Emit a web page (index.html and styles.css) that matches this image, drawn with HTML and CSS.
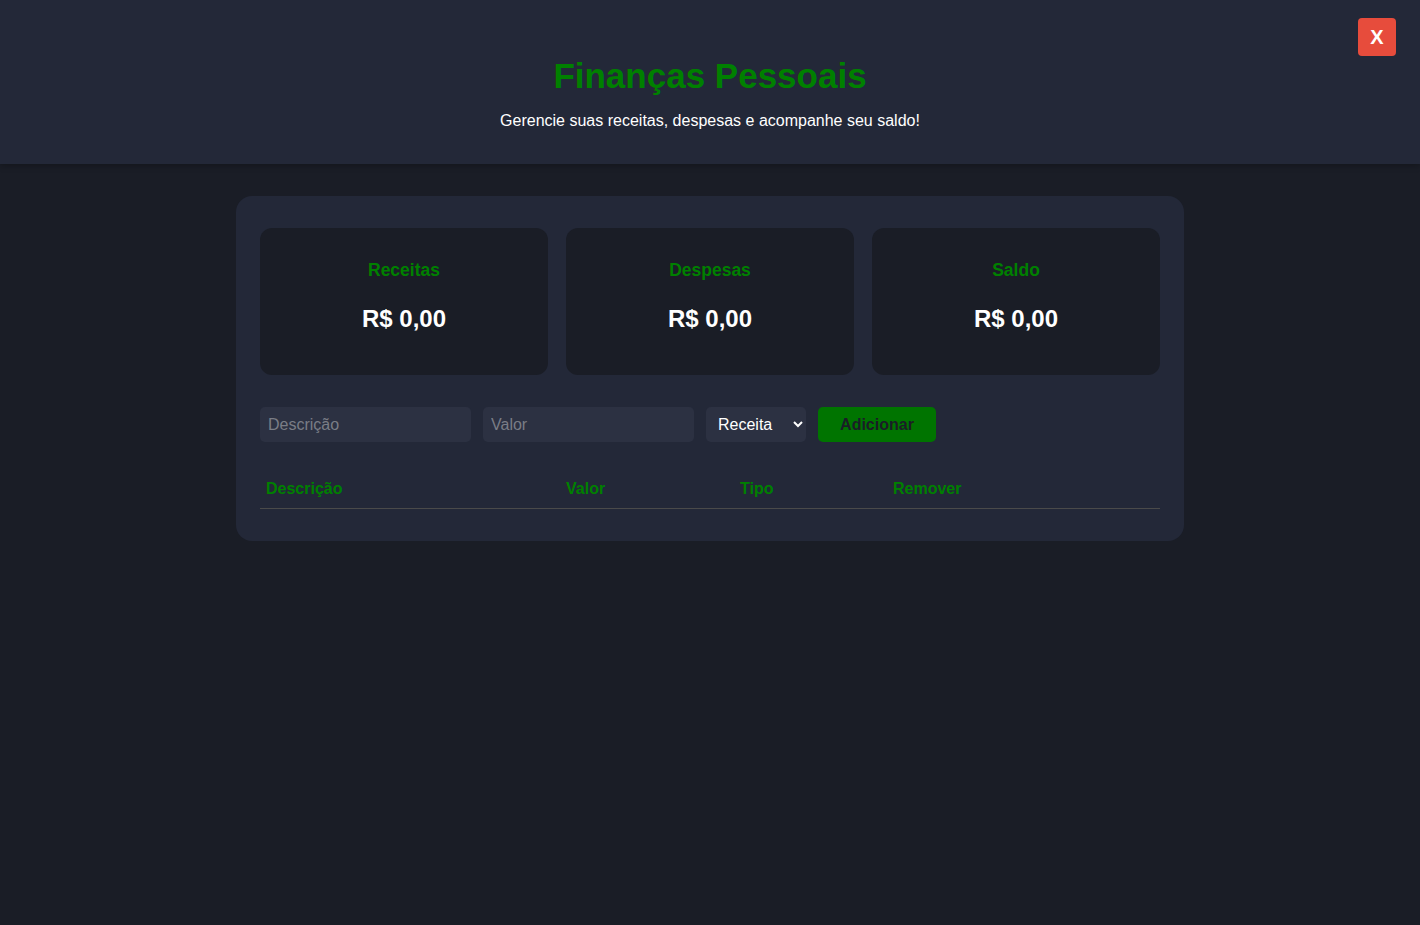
FILE: index.html
```html
<!DOCTYPE html>
<html lang="pt-BR">
<head>
<meta charset="UTF-8">
<title>Finanças Pessoais</title>
<link rel="stylesheet" href="styles.css">
</head>
<body>
<header class="topbar">
  <h1 class="title">Finanças Pessoais</h1>
  <p class="subtitle">Gerencie suas receitas, despesas e acompanhe seu saldo!</p>
  <button class="close-btn" type="button">X</button>
</header>
<main class="panel">
  <section class="cards">
    <div class="card">
      <h3 class="card-label">Receitas</h3>
      <p class="card-value">R$ 0,00</p>
    </div>
    <div class="card">
      <h3 class="card-label">Despesas</h3>
      <p class="card-value">R$ 0,00</p>
    </div>
    <div class="card">
      <h3 class="card-label">Saldo</h3>
      <p class="card-value">R$ 0,00</p>
    </div>
  </section>
  <form class="entry">
    <input class="field" type="text" placeholder="Descrição">
    <input class="field" type="number" placeholder="Valor">
    <select class="kind">
      <option>Receita</option>
      <option>Despesa</option>
    </select>
    <button class="add-btn" type="button">Adicionar</button>
  </form>
  <table class="ledger">
    <thead>
      <tr>
        <th class="col-desc">Descrição</th>
        <th class="col-val">Valor</th>
        <th class="col-type">Tipo</th>
        <th>Remover</th>
      </tr>
    </thead>
    <tbody></tbody>
  </table>
</main>
</body>
</html>
```
FILE: styles.css
```css
* { box-sizing: border-box; }
html, body {
  margin: 0;
  padding: 0;
  background: #1a1d26;
  font-family: "Liberation Sans", Arial, sans-serif;
  color: #ffffff;
  min-height: 100%;
}
body { min-height: 925px; }

.topbar {
  position: relative;
  background: #232838;
  text-align: center;
  padding: 57px 20px 34px;
  box-shadow: 0 2px 6px rgba(0, 0, 0, 0.25);
}
.title {
  margin: 0 0 18px;
  font-size: 35px;
  line-height: 37px;
  font-weight: bold;
  color: #008000;
}
.subtitle {
  margin: 0;
  font-size: 16px;
  line-height: 18px;
  color: #ffffff;
}
.close-btn {
  position: absolute;
  top: 18px;
  right: 24px;
  width: 38px;
  height: 38px;
  border: none;
  border-radius: 4px;
  background: #e74c3c;
  color: #ffffff;
  font-family: "Liberation Sans", Arial, sans-serif;
  font-weight: bold;
  font-size: 20px;
  padding: 0;
}

.panel {
  width: 948px;
  margin: 32px auto 0;
  background: #232838;
  border-radius: 16px;
  padding: 32px 24px;
}

.cards {
  display: grid;
  grid-template-columns: repeat(3, 1fr);
  gap: 18px;
}
.card {
  background: #1a1d26;
  border-radius: 12px;
  height: 147px;
  padding: 32px 20px 0;
  text-align: center;
}
.card-label {
  margin: 0 0 25px;
  font-size: 17.5px;
  line-height: 20px;
  font-weight: bold;
  color: #008000;
}
.card-value {
  margin: 0;
  font-size: 24px;
  line-height: 28px;
  font-weight: bold;
  color: #ffffff;
}

.entry {
  display: flex;
  gap: 12px;
  margin-top: 32px;
}
.field {
  width: 211px;
  height: 35px;
  border: none;
  border-radius: 5px;
  background: #2c3142;
  color: #ffffff;
  font-family: "Liberation Sans", Arial, sans-serif;
  font-size: 16px;
  padding: 0 8px;
  outline: none;
  -moz-appearance: textfield;
}
.field::-webkit-outer-spin-button,
.field::-webkit-inner-spin-button { -webkit-appearance: none; margin: 0; }
.field::placeholder { color: #7a7d86; }
.kind {
  width: 100px;
  height: 35px;
  border: none;
  border-radius: 5px;
  background-color: #2c3142;
  color: #ffffff;
  font-family: "Liberation Sans", Arial, sans-serif;
  font-size: 16px;
  padding: 0 4px 0 8px;
}
.add-btn {
  width: 118px;
  height: 35px;
  border: none;
  border-radius: 5px;
  background: #007400;
  color: #1a1d26;
  font-family: "Liberation Sans", Arial, sans-serif;
  font-weight: bold;
  font-size: 16px;
  padding: 0;
}

.ledger {
  width: 100%;
  margin-top: 28px;
  border-collapse: collapse;
}
.ledger th {
  text-align: left;
  padding: 10px 6px;
  font-size: 16px;
  line-height: 18px;
  font-weight: bold;
  color: #008000;
  border-bottom: 1px solid #4a4a4a;
}
.col-desc { width: 300px; }
.col-val { width: 174px; }
.col-type { width: 153px; }
```
